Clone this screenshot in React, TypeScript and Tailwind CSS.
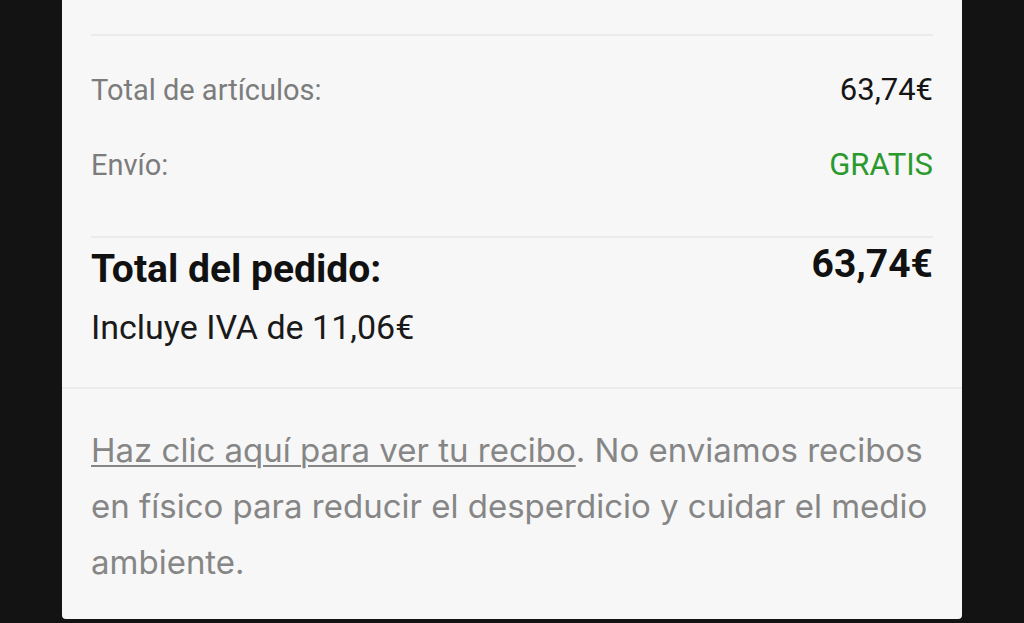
import React from "react";

export default function App() {
  return (
    <div className="w-[1024px] h-[623px] bg-[#131313] flex overflow-hidden">
      <div className="ml-[62px] w-[900px] h-[619px] bg-[#f7f7f7] rounded-b-[4px] flex flex-col">
        <div className="px-[29px] flex flex-col" style={{ fontFamily: "Roboto, 'Noto Sans', sans-serif" }}>
          <div className="mt-[34px] h-[2px] bg-[#ebebeb]" />
          <div className="mt-[36px] h-[36px] flex justify-between items-baseline leading-[36px]">
            <span className="text-[29px] text-[#7c7c7c]">Total de artículos:</span>
            <span className="text-[31px] text-[#151515]">63,74€</span>
          </div>
          <div className="mt-[39px] h-[36px] flex justify-between items-baseline leading-[36px]">
            <span className="text-[29px] text-[#7c7c7c]">Envío:</span>
            <span className="text-[31px] text-[#2b9a2e]">GRATIS</span>
          </div>
          <div className="mt-[53px] h-[2px] bg-[#ebebeb]" />
          <div className="mt-[9px] flex justify-between items-start">
            <div className="flex flex-col">
              <span className="text-[39px] leading-[44px] font-bold text-[#111]">Total del pedido:</span>
              <span className="mt-[16px] text-[34px] leading-[40px] text-[#1a1a1a]">Incluye IVA de 11,06€</span>
            </div>
            <span className="text-[39px] leading-[44px] font-bold text-[#111] -mt-[5px]">63,74€</span>
          </div>
        </div>
        <div className="mt-[40px] h-[2px] bg-[#ebebeb]" />
        <p
          className="px-[29px] mt-[33px] text-[33px] leading-[56px] text-[#868686]"
          style={{ fontFamily: "Inter, 'Open Sans', sans-serif" }}
        >
          <span className="underline decoration-[2px] underline-offset-[3px]">Haz clic aquí para ver tu recibo</span>. No enviamos recibos en físico para reducir el desperdicio y cuidar el medio ambiente.
        </p>
      </div>
    </div>
  );
}
